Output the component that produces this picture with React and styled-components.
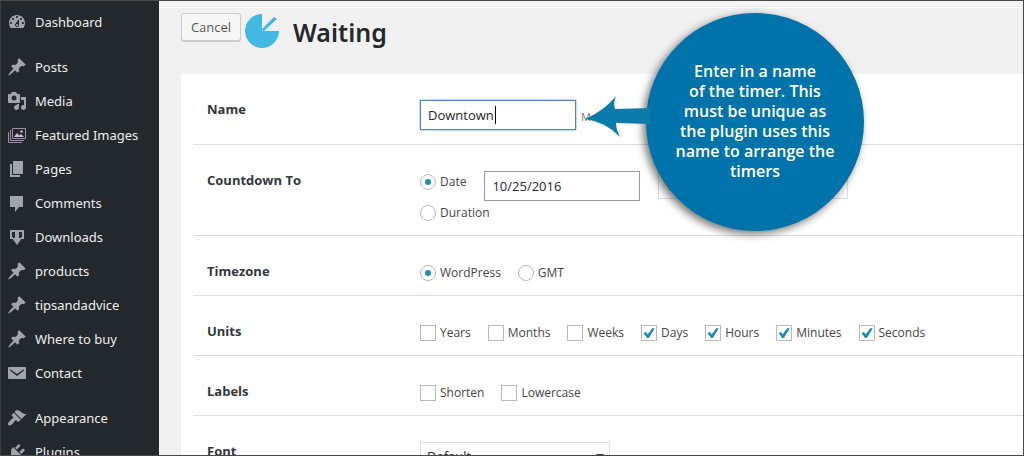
import React from "react";
import { useState } from "react";
import styled, { createGlobalStyle, css } from "styled-components";

const GlobalStyles = createGlobalStyle`
  *, *::before, *::after {
    box-sizing: border-box;
  }
  body {
    margin: 0;
    background: #f1f1f1;
    color: #444;
    font: 13px/16px "Open Sans", sans-serif;
  }
  button, input, select {
    font: inherit;
    color: inherit;
    margin: 0;
  }
`;

const PageStyles = styled.div`
  display: flex;
  height: 100vh;
  overflow: hidden;
  border: 1px solid #4a4649;
  border-left: 0;
`;

const SidebarStyles = styled.nav`
  flex: 0 0 159px;
  padding-top: 4px;
  background: #23282d;
  border-left: 1px solid #3a3f45;
`;

const MenuGroup = styled.ul`
  list-style: none;
  margin: 0 0 11px;
  padding: 0;
`;

const MenuLink = styled.a`
  display: flex;
  align-items: center;
  gap: 8px;
  height: 34px;
  padding-left: 6px;
  color: #eee;
  font: 13px/18px "Noto Sans", sans-serif;
  text-decoration: none;
  white-space: nowrap;
  svg {
    flex: none;
    fill: #a0a5aa;
  }
`;

const MainStyles = styled.main`
  flex: 1;
  min-width: 0;
  padding-left: 22px;
  background: repeating-linear-gradient(#fafafa 0 1px, #f1f1f1 1px 3px) 0 0 /
    100% 7px no-repeat;
`;

const HeaderStyles = styled.header`
  display: flex;
  align-items: flex-start;
  gap: 4px;
  height: 73px;
  padding-top: 12px;
`;

const CancelButton = styled.button`
  height: 28px;
  width: 60px;
  padding: 0;
  color: #555;
  background: #f7f7f7;
  border: 1px solid #ccc;
  border-radius: 3px;
  box-shadow: 0 1px 0 #ccc;
`;

const Title = styled.h1`
  margin: 3px 0 0 8px;
  color: #23282d;
  font: 600 25px/32px "Noto Sans", sans-serif;
`;

const Panel = styled.form`
  padding-left: 13px;
  background: #fff;
`;

const RowStyles = styled.div`
  display: grid;
  grid-template-columns: 213px 1fr;
  padding: 26px 0 14px 13px;
  border-bottom: 1px solid #ddd;
`;

const RowTitle = styled.div`
  color: #32373c;
  font-weight: 700;
  line-height: 18px;
`;

const Lines = styled.div`
  display: grid;
  gap: 1px;
`;

const Line = styled.div`
  display: flex;
  align-items: flex-start;
  gap: ${(props) => props.$gap || 17}px;
`;

const ChoiceStyles = styled.label`
  display: flex;
  align-items: center;
  gap: 4px;
  padding-top: 3px;
  font-size: 12px;
  white-space: nowrap;
`;

const boxStyles = css`
  appearance: none;
  flex: none;
  width: 16px;
  height: 16px;
  background: #fff;
  border: 1px solid #b4b9be;
`;

const Radio = styled.input`
  ${boxStyles};
  display: grid;
  place-items: center;
  border-radius: 50%;
  &:checked::before {
    content: "";
    width: 6px;
    height: 6px;
    border-radius: 50%;
    background: #1e8cbe;
  }
`;

const Checkbox = styled.input`
  ${boxStyles};
`;

const CheckSlot = styled.span`
  position: relative;
  display: flex;
  svg {
    position: absolute;
    inset: 0;
    pointer-events: none;
  }
`;

const TextInput = styled.input`
  width: 156px;
  height: 30px;
  padding: 0 7px;
  color: #23282d;
  background: #fff;
  border: 1px solid ${(props) => (props.$active ? "#4f83cc" : "#999")};
  box-shadow: ${(props) => (props.$active ? "0 0 2px #5b9dd9" : "none")};
  outline: 0;
`;

const NameSlot = styled.div`
  position: relative;
`;

const Caret = styled.span`
  position: absolute;
  top: 6px;
  left: 75px;
  width: 1px;
  height: 18px;
  background: #000;
`;

const Hint = styled.span`
  padding-top: 9px;
  color: #777;
  font-size: 11px;
`;

const SelectStyles = styled.div`
  position: relative;
  width: 190px;
  select {
    appearance: none;
    width: 100%;
    height: 28px;
    padding: 0 6px;
    color: #23282d;
    background: #fff;
    border: 1px solid #ddd;
    border-radius: 0;
  }
  svg {
    position: absolute;
    top: 12px;
    right: 6px;
    pointer-events: none;
  }
`;

const CalloutStyles = styled.aside`
  position: absolute;
  top: 13px;
  left: 646px;
  display: flex;
  align-items: center;
  justify-content: center;
  width: 218px;
  height: 218px;
  border-radius: 50%;
  background: #0073aa;
  box-shadow: -3px 3px 8px rgba(0, 0, 0, 0.55);
  color: #fff;
  font: 600 16px/20px "Open Sans", sans-serif;
  text-align: center;
  p {
    margin: 0;
    padding-bottom: 2px;
  }
  svg {
    position: absolute;
    top: 82px;
    left: -62px;
  }
`;

const pin =
  "M10.44 3.02l1.82-1.82 6.36 6.35-1.83 1.82c-1.05-.68-2.48-.57-3.41.36l-.75.75c-.92.93-1.04 2.35-.35 3.41l-1.83 1.82-2.41-2.41-2.8 2.79c-.42.42-3.38 2.71-3.8 2.29s1.86-3.39 2.28-3.81l2.79-2.79L4.1 9.36l1.83-1.82c1.05.69 2.48.57 3.4-.36l.75-.75c.93-.92 1.05-2.35.36-3.41z";

const icons = {
  dashboard: (
    <path d="M3.76 16h12.48c1.1-1.37 1.76-3.11 1.76-5 0-4.42-3.58-8-8-8s-8 3.58-8 8c0 1.89.66 3.63 1.76 5zM10 4c.55 0 1 .45 1 1s-.45 1-1 1-1-.45-1-1 .45-1 1-1zM6 6c.55 0 1 .45 1 1s-.45 1-1 1-1-.45-1-1 .45-1 1-1zm8 0c.55 0 1 .45 1 1s-.45 1-1 1-1-.45-1-1 .45-1 1-1zm-5.37 5.55L12 7v6c0 1.1-.9 2-2 2s-2-.9-2-2c0-.57.24-1.08.63-1.45zM4 10c.55 0 1 .45 1 1s-.45 1-1 1-1-.45-1-1 .45-1 1-1zm12 0c.55 0 1 .45 1 1s-.45 1-1 1-1-.45-1-1 .45-1 1-1zm-5 3c0-.55-.45-1-1-1s-1 .45-1 1 .45 1 1 1 1-.45 1-1z" />
  ),
  pin: <path d={pin} />,
  media: (
    <path d="M13 11V4c0-.55-.45-1-1-1h-1.67L9 1H5L3.67 3H2c-.55 0-1 .45-1 1v7c0 .55.45 1 1 1h10c.55 0 1-.45 1-1zM7 4.5c1.38 0 2.5 1.12 2.5 2.5S8.38 9.5 7 9.5 4.5 8.38 4.5 7 5.62 4.5 7 4.5zM14 6h5v10.5c0 1.38-1.12 2.5-2.5 2.5S14 17.88 14 16.5s1.12-2.5 2.5-2.5c.17 0 .34.02.5.05V9h-3V6zm-4 8.05V13h2v3.5c0 1.38-1.12 2.5-2.5 2.5S7 17.88 7 16.5 8.12 14 9.5 14c.17 0 .34.02.5.05z" />
  ),
  images: (
    <g fill="none" stroke="#a58bad">
      <path d="M5.5 3.5h13v10h-13zM3.5 5v10.500H17M1.500 7v10.500H15" />
      <path d="M7 12l3-4 2 2.500 2-1.500 3 3z" fill="#c9bfcd" stroke="none" />
      <circle cx="14.500" cy="6.500" r="1.200" fill="#c9bfcd" stroke="none" />
    </g>
  ),
  page: <path d="M6 15V2h10v13H6zm-1 1h8v2H3V5h2v11z" />,
  comment: <path d="M3 3h13v11h-4l-4 5v-5H3z" />,
  download: (
    <path d="M3 3h14v9h-3v-2h1V5h-3v6h3l-5 7-5-7h3V5H5v5h1v2H3z" />
  ),
  mail: (
    <path
      fillRule="evenodd"
      d="M2 4h16q1 0 1 1v10q0 1-1 1H2q-1 0-1-1V5q0-1 1-1zm1.200 2.200v1.600L10 13l6.800-5.200V6.200L10 11z"
    />
  ),
  brush: (
    <path d="M14.48 11.06L7.41 3.99l1.5-1.5c.5-.56 2.3-.47 3.51.32 1.21.8 1.43 1.28 2.91 2.1 1.18.64 2.45 1.26 4.45.85zm-.71.71L6.7 4.7 4.93 6.47c-.39.39-.39 1.02 0 1.41l1.06 1.06c.39.39.39 1.03 0 1.42-.6.6-1.43 1.11-2.21 1.69-.35.26-.7.53-1.01.84C1.43 14.23.4 16.08 1.4 17.07c.99 1 2.84-.03 4.18-1.36.31-.31.58-.66.85-1.02.57-.78 1.08-1.61 1.69-2.21.39-.39 1.02-.39 1.41 0l1.06 1.06c.39.39 1.02.39 1.41 0z" />
  ),
  plug: (
    <path d="M13.11 4.36L9.87 7.6 8 5.73l3.24-3.24c.35-.34 1.05-.2 1.56.32.52.51.66 1.21.31 1.55zm-8 1.77l.91-1.12 9.01 9.01-1.19.84c-.71.71-2.63 1.16-3.82 1.16H6.14L4.9 17.26c-.59.59-1.54.59-2.12 0-.59-.58-.59-1.53 0-2.12l1.24-1.24v-3.88c0-1.13.4-3.19 1.09-3.89zm7.26 3.97l3.24-3.24c.34-.35 1.04-.21 1.55.31.52.51.66 1.21.31 1.55l-3.24 3.25z" />
  ),
};

const menu = [
  [{ label: "Dashboard", icon: "dashboard" }],
  [
    { label: "Posts", icon: "pin" },
    { label: "Media", icon: "media" },
    { label: "Featured Images", icon: "images" },
    { label: "Pages", icon: "page" },
    { label: "Comments", icon: "comment" },
    { label: "Downloads", icon: "download" },
    { label: "products", icon: "pin" },
    { label: "tipsandadvice", icon: "pin" },
    { label: "Where to buy", icon: "pin" },
    { label: "Contact", icon: "mail" },
  ],
  [
    { label: "Appearance", icon: "brush" },
    { label: "Plugins", icon: "plug" },
  ],
];

const units = ["Years", "Months", "Weeks", "Days", "Hours", "Minutes", "Seconds"];

const Sidebar = () => (
  <SidebarStyles>
    {menu.map((group, index) => (
      <MenuGroup key={index}>
        {group.map((item) => (
          <li key={item.label}>
            <MenuLink href="#">
              <svg width="20" height="20" viewBox="0 0 20 20">
                {icons[item.icon]}
              </svg>
              {item.label}
            </MenuLink>
          </li>
        ))}
      </MenuGroup>
    ))}
  </SidebarStyles>
);

const Row = ({ title, htmlFor, children }) => (
  <RowStyles>
    <RowTitle>
      {htmlFor ? <label htmlFor={htmlFor}>{title}</label> : title}
    </RowTitle>
    <Lines>{children}</Lines>
  </RowStyles>
);

const RadioChoice = ({ name, label, value, onChange }) => (
  <ChoiceStyles>
    <Radio
      type="radio"
      name={name}
      checked={value === label}
      onChange={() => onChange(label)}
    />
    {label}
  </ChoiceStyles>
);

const CheckChoice = ({ label, defaultChecked = false }) => {
  const [checked, setChecked] = useState(defaultChecked);
  return (
    <ChoiceStyles>
      <CheckSlot>
        <Checkbox
          type="checkbox"
          checked={checked}
          onChange={(e) => setChecked(e.target.checked)}
        />
        {checked && (
          <svg width="16" height="16" viewBox="0 0 16 16">
            <path d="M2.500 8l2.300-1 1.900 2.300L11.500 3l2.200.4L7.900 12.900H6z" fill="#1e8cbe" />
          </svg>
        )}
      </CheckSlot>
      {label}
    </ChoiceStyles>
  );
};

const Select = ({ option, ...props }) => (
  <SelectStyles>
    <select {...props}>
      <option>{option}</option>
    </select>
    <svg width="8" height="5" viewBox="0 0 8 5">
      <path d="M0 0h8L4 5z" fill="#32373c" />
    </svg>
  </SelectStyles>
);

const Callout = () => (
  <CalloutStyles>
    <svg width="66" height="44" viewBox="0 0 66 44">
      <path
        d="M1 24Q20 16 32 1Q29 8 31 14L66 13V29L32 28Q32 34 36 42Q22 27 1 24z"
        fill="#0b7bab"
      />
    </svg>
    <p>
      Enter in a name
      <br />
      of the timer. This
      <br />
      must be unique as
      <br />
      the plugin uses this
      <br />
      name to arrange the
      <br />
      timers
    </p>
  </CalloutStyles>
);

const App = () => {
  const [name, setName] = useState("Downtown");
  const [date, setDate] = useState("10/25/2016");
  const [mode, setMode] = useState("Date");
  const [zone, setZone] = useState("WordPress");

  return (
    <PageStyles>
      <GlobalStyles />
      <Sidebar />
      <MainStyles>
        <HeaderStyles>
          <CancelButton type="button">Cancel</CancelButton>
          <svg width="36" height="36" viewBox="0 0 36 36">
            <path d="M17 18V1A17 17 0 1 0 34 18z" fill="#43b8e3" />
            <path d="M16 17L29 4l3 2-13 12z" fill="#43b8e3" />
          </svg>
          <Title>Waiting</Title>
        </HeaderStyles>
        <Panel>
          <Row title="Name" htmlFor="name">
            <Line $gap={5}>
              <NameSlot>
                <TextInput
                  $active
                  id="name"
                  value={name}
                  onChange={(e) => setName(e.target.value)}
                />
                <Caret />
              </NameSlot>
              <Hint>Must be</Hint>
            </Line>
          </Row>
          <Row title="Countdown To">
            <Line $gap={18}>
              <RadioChoice name="mode" label="Date" value={mode} onChange={setMode} />
              <TextInput
                aria-label="Date"
                value={date}
                onChange={(e) => setDate(e.target.value)}
              />
              <Select aria-label="Time" option="12:00 am" />
            </Line>
            <Line>
              <RadioChoice name="mode" label="Duration" value={mode} onChange={setMode} />
            </Line>
          </Row>
          <Row title="Timezone">
            <Line>
              <RadioChoice name="zone" label="WordPress" value={zone} onChange={setZone} />
              <RadioChoice name="zone" label="GMT" value={zone} onChange={setZone} />
            </Line>
          </Row>
          <Row title="Units">
            <Line>
              {units.map((unit, index) => (
                <CheckChoice key={unit} label={unit} defaultChecked={index > 2} />
              ))}
            </Line>
          </Row>
          <Row title="Labels">
            <Line>
              <CheckChoice label="Shorten" />
              <CheckChoice label="Lowercase" />
            </Line>
          </Row>
          <Row title="Font" htmlFor="font">
            <Select id="font" option="Default" />
          </Row>
        </Panel>
      </MainStyles>
      <Callout />
    </PageStyles>
  );
};

export default App;
